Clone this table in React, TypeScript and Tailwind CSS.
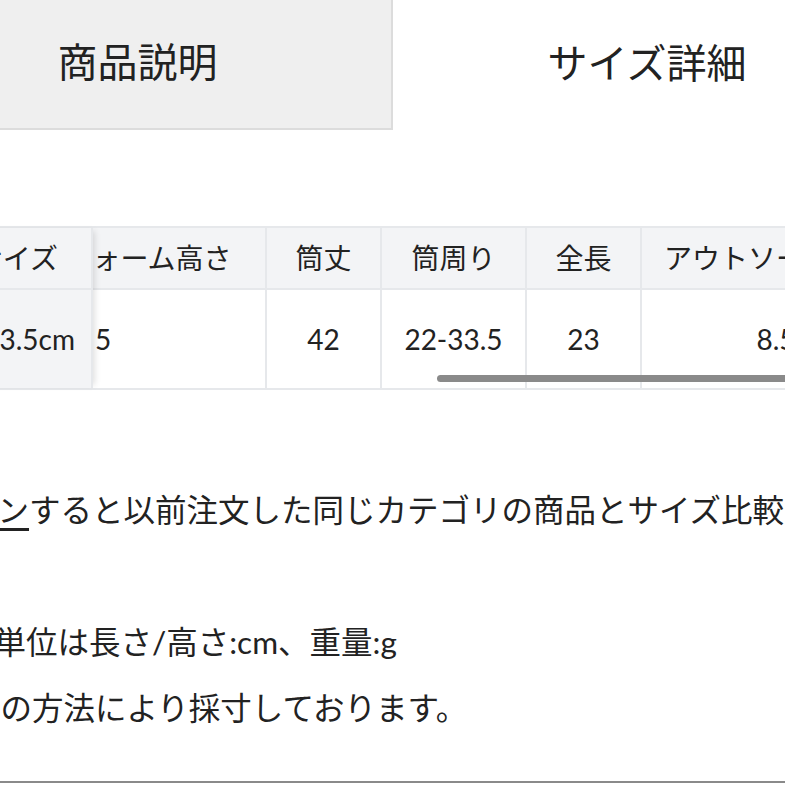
const font = { fontFamily: '"Lato", "Noto Sans CJK JP", sans-serif' };

export default function App() {
  return (
    <div className="w-[785px] h-[785px] overflow-hidden bg-white text-[#222]" style={font}>
      {/* Tabs */}
      <div className="flex ml-[-116px]">
        <div className="w-[509px] h-[130px] shrink-0 bg-[#efefef] border-r-2 border-b-2 border-[#dcdcdc] flex items-center justify-center pb-[4px] text-[40px]">
          商品説明
        </div>
        <div className="w-[508px] h-[130px] shrink-0 bg-white flex items-center justify-center pb-[4px] text-[40px]">
          サイズ詳細
        </div>
      </div>

      {/* Size table */}
      <div className="relative mt-[96px] text-[28px] border-t-2 border-b-2 border-[#e6e8eb]">
        <div className="flex">
          <div className="relative z-10 ml-[-58px] w-[151px] shrink-0 flex flex-col bg-[#f3f4f6] border-r-2 border-[#e6e8eb] shadow-[5px_0_6px_-3px_rgba(0,0,0,0.12)]">
            <div className="h-[62px] flex items-center justify-end pr-[33px] border-b-2 border-[#e6e8eb]">サイズ</div>
            <div className="h-[98px] flex items-center justify-end pr-[16px]">23.5cm</div>
          </div>
          <div className="ml-[-174px] w-[348px] shrink-0 flex flex-col border-r-2 border-[#e6e8eb]">
            <div className="h-[62px] bg-[#f3f4f6] flex items-center justify-center whitespace-nowrap border-b-2 border-[#e6e8eb]">プラットフォーム高さ</div>
            <div className="h-[98px] flex items-center justify-center pl-[22px]">5</div>
          </div>
          <div className="w-[115px] shrink-0 flex flex-col border-r-2 border-[#e6e8eb]">
            <div className="h-[62px] bg-[#f3f4f6] flex items-center justify-center border-b-2 border-[#e6e8eb]">筒丈</div>
            <div className="h-[98px] flex items-center justify-center">42</div>
          </div>
          <div className="w-[145px] shrink-0 flex flex-col border-r-2 border-[#e6e8eb]">
            <div className="h-[62px] bg-[#f3f4f6] flex items-center justify-center border-b-2 border-[#e6e8eb]">筒周り</div>
            <div className="h-[98px] flex items-center justify-center">22-33.5</div>
          </div>
          <div className="w-[115px] shrink-0 flex flex-col border-r-2 border-[#e6e8eb]">
            <div className="h-[62px] bg-[#f3f4f6] flex items-center justify-center border-b-2 border-[#e6e8eb]">全長</div>
            <div className="h-[98px] flex items-center justify-center">23</div>
          </div>
          <div className="w-[270px] shrink-0 flex flex-col border-r-2 border-[#e6e8eb]">
            <div className="h-[62px] bg-[#f3f4f6] flex items-center justify-center whitespace-nowrap border-b-2 border-[#e6e8eb]">アウトソール高さ</div>
            <div className="h-[98px] flex items-center justify-center">8.5</div>
          </div>
        </div>
        {/* overlay scroll indicator */}
        <div className="absolute left-[437px] right-[-20px] top-[147px] h-[7px] rounded-full bg-[#8a8a8a]" />
      </div>

      {/* Notes */}
      <div className="mt-[87px] text-[31.5px] leading-[66px] whitespace-nowrap">
        <div className="ml-[-97px]">
          <span className="underline underline-offset-[6px]">ログイン</span>すると以前注文した同じカテゴリの商品とサイズ比較できます。
        </div>
        <div className="h-[66px]" />
        <div className="ml-[-37px]">※単位は長さ/高さ:cm、重量:g</div>
        <div className="ml-[-94px]">※下記の方法により採寸しております。</div>
      </div>

      <div className="mt-[40px] border-t-2 border-[#8a8a8a]" />
    </div>
  );
}
